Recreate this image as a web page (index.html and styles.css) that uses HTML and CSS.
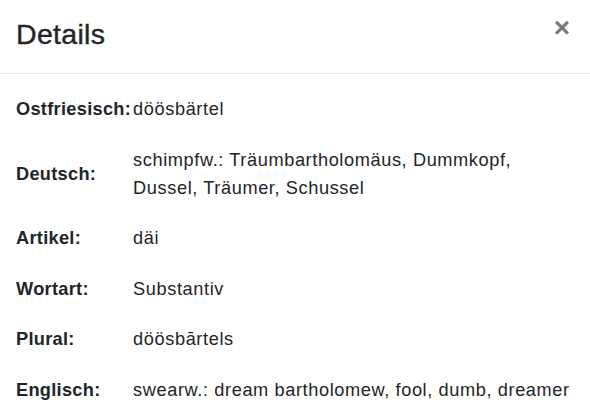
FILE: index.html
```html
<!DOCTYPE html>
<html lang="de">
<head>
<meta charset="utf-8">
<title>Details</title>
<link rel="stylesheet" href="styles.css">
</head>
<body>
<div class="modal">
  <div class="modal-header">
    <h5 class="modal-title">Details</h5>
    <button class="close" type="button" aria-label="Close">×</button>
  </div>
  <div class="modal-body">
    <table class="details">
      <tbody>
        <tr><th>Ostfriesisch:</th><td>döösbärtel</td></tr>
        <tr><th>Deutsch:</th><td>schimpfw.: Träumbartholomäus, Dummkopf, Dussel, Träumer, Schussel</td></tr>
        <tr><th>Artikel:</th><td>däi</td></tr>
        <tr><th>Wortart:</th><td>Substantiv</td></tr>
        <tr><th>Plural:</th><td>döösbārtels</td></tr>
        <tr><th>Englisch:</th><td>swearw.: dream bartholomew, fool, dumb, dreamer</td></tr>
      </tbody>
    </table>
  </div>
</div>
</body>
</html>
```
FILE: styles.css
```css
html, body {
  margin: 0;
  padding: 0;
  background: #fff;
}
body {
  font-family: "Liberation Sans", Arial, sans-serif;
  color: #212529;
  font-size: 18.2px;
  line-height: 28px;
}
.modal {
  width: 590px;
}
.modal-header {
  display: flex;
  align-items: center;
  justify-content: space-between;
  height: 74px;
  padding: 0 16px 0 16px;
  box-sizing: border-box;
  border-bottom: 1px solid #e3e6e8;
}
.modal-title {
  margin: 0;
  font-size: 28.5px;
  font-weight: 400;
  letter-spacing: 0.3px;
  -webkit-text-stroke: 0.4px #212529;
  line-height: 34px;
  padding-bottom: 6px;
}
.close {
  border: 0;
  background: none;
  padding: 0;
  margin: 0 4px 18px 0;
  font-family: "Liberation Sans", Arial, sans-serif;
  font-size: 28px;
  font-weight: 700;
  line-height: 28px;
  color: #7a7a7a;
  cursor: pointer;
}
.modal-body {
  padding: 10px 16px 0 16px;
}
.details {
  border-collapse: collapse;
  width: 100%;
}
.details th {
  text-align: left;
  font-weight: 700;
  letter-spacing: 0.3px;
  padding: 11.25px 0;
  vertical-align: middle;
  white-space: nowrap;
}
.details td {
  padding: 11.25px 0 11.25px 2px;
  letter-spacing: 0.6px;
  vertical-align: middle;
}
```
